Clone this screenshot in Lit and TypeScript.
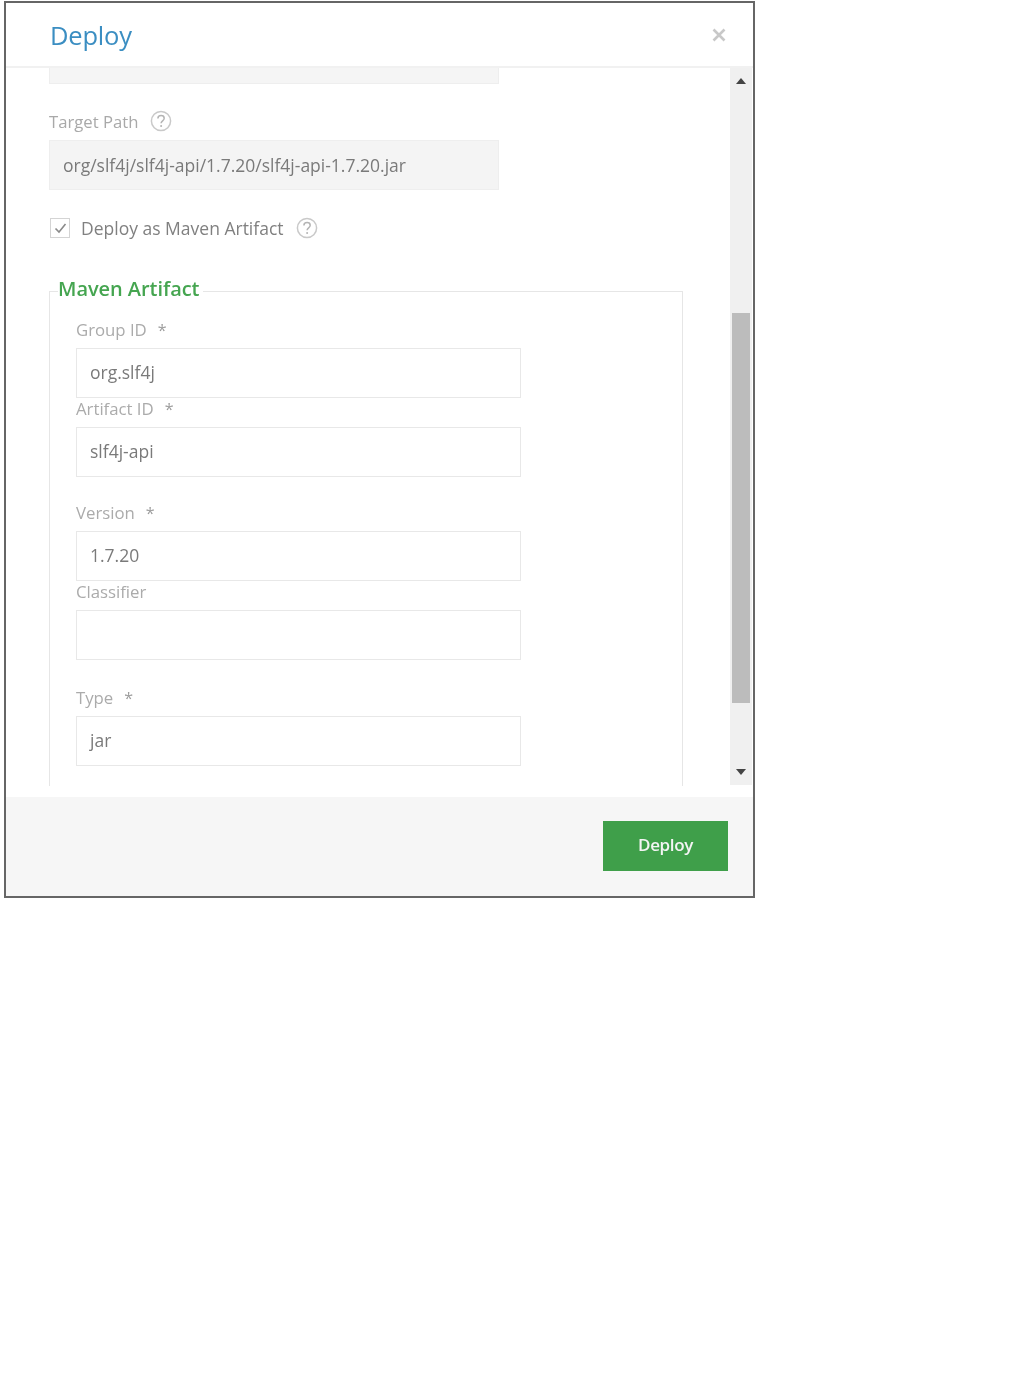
import { LitElement, html, css } from "lit";
import { customElement } from "lit/decorators.js";

const help = html`<svg class="help" viewBox="0 0 22 22" width="22" height="22" aria-hidden="true">
  <circle cx="11" cy="11" r="9.6" fill="none" stroke="#c9c9c9" stroke-width="1.5"></circle>
  <path d="M7.9 8.6c0-1.9 1.4-3 3.2-3s3.1 1.1 3.1 2.7c0 2.5-3.1 2.6-3.1 5" fill="none" stroke="#b4b4b4" stroke-width="1.5"></path>
  <circle cx="11.1" cy="16" r="1" fill="#b4b4b4"></circle>
</svg>`;

@customElement("app-root")
export class AppRoot extends LitElement {
  static styles = css`
    :host { display: block; font-family: "Open Sans", "Liberation Sans", sans-serif; background: #fff; height: 1392px; }
    * { box-sizing: border-box; }
    .page { padding: 1px 0 0 4px; filter: blur(0.55px); }
    .dialog { width: 751px; height: 897px; border: 2px solid #666; display: flex; flex-direction: column; background: #fff; }
    .header { height: 65px; flex: none; border-bottom: 2px solid #f1f1f1; display: flex; align-items: center; justify-content: space-between; padding: 0 27px 0 44px; }
    .title { font-size: 25.5px; color: #3b8ec2; line-height: 36px; letter-spacing: -0.2px; }
    .close { width: 14px; height: 14px; }
    .middle { height: 718px; flex: none; display: flex; overflow: hidden; }
    .content { flex: 1; min-width: 0; overflow: hidden; padding-left: 43px; }
    .stub { width: 450px; height: 16px; background: #f5f5f5; border: 1px solid #eeeeee; border-top: none; }
    .target-label { margin-top: 23px; height: 28px; display: flex; align-items: center; gap: 11px; color: #a9a9a9; font-size: 16.7px; }
    .readonly { width: 450px; height: 50px; margin-top: 5px; background: #f4f4f4; border: 1px solid #eeeeee; padding-left: 13px; display: flex; align-items: center; color: #7a7a7a; font-size: 17.5px; }
    .check-row { margin-top: 27px; height: 22px; display: flex; align-items: center; color: #808080; font-size: 17.5px; }
    .box { width: 20px; height: 20px; border: 1.5px solid #d4d4d4; display: flex; align-items: center; justify-content: center; margin-right: 11px; margin-left: 1px; }
    .check-row .help { margin-left: 12px; }
    fieldset { margin: 36px 0 0 0; padding: 0 0 40px 26px; width: 634px; border: 1.5px solid #e6e6e6; }
    legend { color: #45a550; font-size: 20px; font-weight: 600; padding: 0 4px 6px 0; margin-left: -18px; line-height: 27px; letter-spacing: -0.05px; }
    .field { width: 445px; }
    .field.first { margin-top: 11px; }
    .field.tight { margin-top: 0; }
    .field.loose { margin-top: 25px; }
    .field.looser { margin-top: 27px; }
    .label { height: 29px; line-height: 22px; display: flex; gap: 11px; color: #ababab; font-size: 16.8px; letter-spacing: -0.02px; }
    .star { color: #9c9c9c; font-size: 16px; }
    .input { height: 50px; border: 1.5px solid #e8e8e8; padding: 0 0 3px 13px; display: flex; align-items: center; color: #7a7a7a; font-size: 17.5px; }
    .scrollbar { width: 22px; flex: none; background: #f0f0f0; display: flex; flex-direction: column; align-items: center; margin-right: 1px; height: 717px; }
    .arrow { flex: none; height: 26px; display: flex; align-items: center; }
    .up { margin-bottom: 219px; }
    .thumb { flex: none; width: 18px; height: 390px; background: #bcbcbc; }
    .gap { flex: 1; }
    .footer { flex: 1; margin-top: 11px; background: #f6f6f6; display: flex; justify-content: flex-end; align-items: flex-start; padding: 24px 25px 0 0; }
    .btn { width: 125px; height: 50px; padding-bottom: 3px; background: #3f9f4a; display: flex; align-items: center; justify-content: center; color: #f4f4f4; font-size: 17px; font-weight: 600; letter-spacing: -0.35px; }
  `;

  field(label: string, value: string, cls: string, required = true) {
    return html`<div class="field ${cls}">
      <div class="label"><span>${label}</span>${required ? html`<span class="star">*</span>` : ""}</div>
      <div class="input">${value}</div>
    </div>`;
  }

  render() {
    return html`<div class="page"><div class="dialog">
      <div class="header">
        <span class="title">Deploy</span>
        <svg class="close" viewBox="0 0 14 14"><path d="M1.5 1.5l11 11M12.5 1.5l-11 11" stroke="#c8c8c8" stroke-width="2.6" fill="none"></path></svg>
      </div>
      <div class="middle">
        <div class="content">
          <div class="stub"></div>
          <div class="target-label"><span>Target Path</span>${help}</div>
          <div class="readonly">org/slf4j/slf4j-api/1.7.20/slf4j-api-1.7.20.jar</div>
          <div class="check-row">
            <span class="box"><svg width="13" height="11" viewBox="0 0 13 11"><path d="M1.5 5.5l3.5 3.6 6.5-8" fill="none" stroke="#8a8a8a" stroke-width="1.6"></path></svg></span>
            <span>Deploy as Maven Artifact</span>${help}
          </div>
          <fieldset>
            <legend>Maven Artifact</legend>
            ${this.field("Group ID", "org.slf4j", "first")}
            ${this.field("Artifact ID", "slf4j-api", "tight")}
            ${this.field("Version", "1.7.20", "loose")}
            ${this.field("Classifier", "", "tight", false)}
            ${this.field("Type", "jar", "looser")}
          </fieldset>
        </div>
        <div class="scrollbar">
          <div class="arrow up"><svg width="10" height="6" viewBox="0 0 10 6"><path d="M5 0l5 6H0z" fill="#444"></path></svg></div>
          <div class="thumb"></div>
          <div class="gap"></div>
          <div class="arrow"><svg width="10" height="6" viewBox="0 0 10 6"><path d="M0 0h10L5 6z" fill="#444"></path></svg></div>
        </div>
      </div>
      <div class="footer"><div class="btn">Deploy</div></div>
    </div></div>`;
  }
}
